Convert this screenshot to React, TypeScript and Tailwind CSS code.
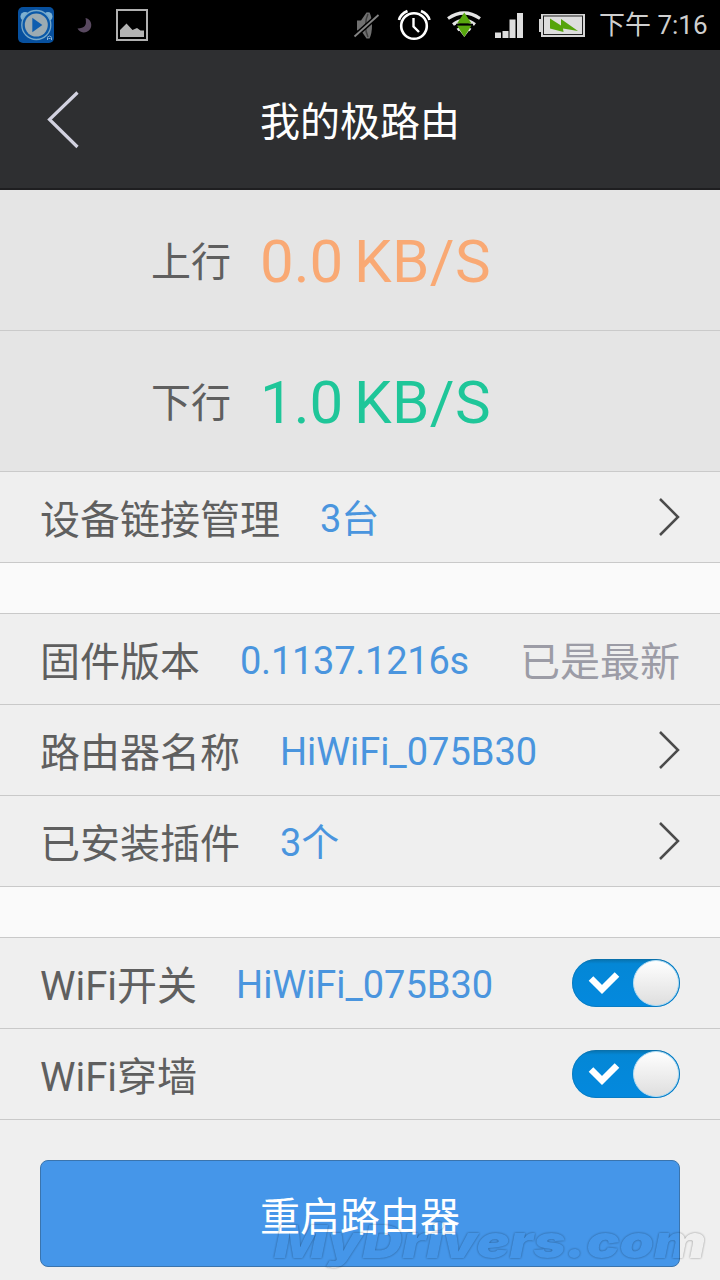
import type { ReactNode } from 'react'

export default function App() {
  return (
    <div className="relative flex h-[1280px] w-[720px] flex-col overflow-hidden bg-[#efefef] font-['Roboto','Noto_Sans_CJK_SC',sans-serif] text-[#5f5f5f]">
      <StatusBar />

      <header className="relative flex h-[140px] shrink-0 items-center justify-center border-b-2 border-[#1e1e20] bg-[#2e2f31]">
        <button aria-label="返回" className="absolute top-10 left-[46px]">
          <svg width="34" height="60" viewBox="0 0 34 60" fill="none">
            <path d="M31.5 2.5 3.5 29.5l28 27.5" stroke="#d2d2e0" strokeWidth="3.200" />
          </svg>
        </button>
        <h1 className="pt-2 text-[40px] leading-none text-white">我的极路由</h1>
      </header>

      <Speed label="上行" value="0.0" color="text-[#f9a974]" />
      <Speed label="下行" value="1.0" color="text-[#1fc699]" />

      <Row label="设备链接管理" value="3台">
        <Chevron />
      </Row>
      <Gap />
      <Row label="固件版本" value="0.1137.1216s" valueClass="tracking-[-0.25px]">
        <span className="block pt-2 text-[40px] leading-none text-[#9c9ca6]">已是最新</span>
      </Row>
      <Row label="路由器名称" value="HiWiFi_075B30">
        <Chevron />
      </Row>
      <Row label="已安装插件" value="3个">
        <Chevron />
      </Row>
      <Gap />
      <Row label="WiFi开关" labelClass="-mr-px" value="HiWiFi_075B30">
        <Toggle id="wifi" />
      </Row>
      <Row label="WiFi穿墙">
        <Toggle id="wall" />
      </Row>

      <div className="px-10 pt-10">
        <button className="flex h-[107px] w-full items-center justify-center rounded-lg border border-[#3a74ad] bg-[#4596e9] pt-2 text-[40px] leading-none text-white">
          重启路由器
        </button>
      </div>

      <Watermark />
    </div>
  )
}

function StatusBar() {
  return (
    <div className="flex h-[50px] shrink-0 items-center bg-black">
      <svg width="160" height="50" viewBox="0 0 160 50">
        <rect x="18" y="7" width="36" height="36" rx="5" fill="#07509e" />
        <circle cx="25" cy="16.500" r="4.500" fill="#7db1d2" />
        <circle cx="48" cy="16.500" r="4.500" fill="#7db1d2" />
        <circle cx="36.300" cy="25" r="14.500" fill="#0b59a8" stroke="#77a9ca" strokeWidth="1.300" />
        <circle cx="36.300" cy="25" r="11.500" fill="#9cabb2" />
        <path d="M32.300 17.800v14.500l10-7.300z" fill="#0d5db0" />
        <path d="M47 37.500q2.500-3 5 0M47.500 40v-2M51.500 40v-2M48.500 38.500h2" stroke="#8db5d6" fill="none" />
        <path d="M85.500 18a7.300 7.300 0 1 1-8 10.500Q88 28.500 85.500 18z" fill="#594960" />
        <rect x="117" y="10" width="30" height="30" fill="none" stroke="#b1b1b1" strokeWidth="2" />
        <path d="M120 37v-7l6.500-6.500 6 6.500 4.500-2 3.500 2.500H144V37z" fill="#b4b4b4" />
      </svg>

      <svg className="ml-auto" width="250" height="50" viewBox="340 0 250 50">
        {/* mute */}
        <path d="M357 20.500h4l5.500-8h3q2.500 5 2.500 13t-2.500 13h-3l-5.500-8h-4z" fill="#707070" />
        <path d="M368 14q-2.500 5-2.500 11.500T368 37" fill="none" stroke="#3f3f3f" strokeWidth="1.500" />
        <path d="M354.500 36.500 378.500 15" stroke="#000" strokeWidth="5" />
        <path d="M354.500 36.500 378.500 15" stroke="#858585" strokeWidth="1.800" />

        {/* alarm */}
        <g fill="none" stroke="#fff">
          <circle cx="414" cy="26" r="12.800" strokeWidth="2.600" />
          <path d="M413.500 18v8.500l5.500 5.500" strokeWidth="2.400" />
          <path d="M399 20q1.500-6 8.500-9M429.500 20q-1.500-6-8.500-9" strokeWidth="2.600" />
        </g>

        {/* wifi */}
        <g fill="none" stroke="#e4e4e4" strokeWidth="3.200">
          <path d="M448 18.500q16-11 32 0" />
          <path d="M453 24.500q11-8 22 0" />
          <path d="M457.500 30q6.500-4.500 13 0" />
        </g>
        <path d="M464.300 37 459 30h10.600z" fill="#e4e4e4" />
        <path d="M464.300 12.500 471.500 23.500h-14.500z" fill="#58a80e" />
        <path d="M457 25.500h14.500L464.300 37z" fill="#58a80e" />
        <path d="M456 24.500h17" stroke="#000" strokeWidth="1.500" />

        {/* signal */}
        <path d="M495 32.500h6V38h-6zM502.500 31h6v7h-6zM509.500 19.500h6V38h-6zM517 13h6v25h-6z" fill="#dedede" />

        {/* battery */}
        <path d="M541 14h44v23h-44v-5h-2V19h2z" fill="#d6d6d6" />
        <rect x="543.500" y="16" width="39" height="18.500" fill="#dedede" stroke="#222" />
        <path d="M550 18.500l11 7v-6.500l17 12-15-2.500.5 3.500-13.500-3.500z" fill="#55a40b" />
      </svg>

      <span className="mr-3 ml-[9px] w-[109px] text-[26px] leading-none whitespace-nowrap text-[#cfcfcf]">
        下午 7:16
      </span>
    </div>
  )
}

function Speed({ label, value, color }: { label: string; value: string; color: string }) {
  return (
    <div className="flex h-[141px] shrink-0 items-center border-b border-[#cacaca] bg-[#e5e5e5] pl-[151px]">
      <span className="w-[109px] pt-1.5 text-[40px] leading-none">{label}</span>
      <span className={`flex pt-1 text-[60px] leading-none ${color}`}>
        <span className="w-[94px]">{value}</span>
        <span className="tracking-[0.4px]">KB/S</span>
      </span>
    </div>
  )
}

type RowProps = {
  label: string
  labelClass?: string
  value?: string
  valueClass?: string
  children: ReactNode
}

function Row({ label, labelClass = '', value, valueClass = '', children }: RowProps) {
  return (
    <div className="flex h-[91px] shrink-0 items-center border-b border-[#c9c9c9] bg-[#efefef] px-10">
      <span className={`pt-[7px] text-[40px] leading-none ${labelClass}`}>{label}</span>
      {value && <span className={`ml-10 pt-1 text-[38px] leading-none text-[#4a95de] ${valueClass}`}>{value}</span>}
      <div className="ml-auto">{children}</div>
    </div>
  )
}

function Gap() {
  return <div className="h-[51px] shrink-0 border-b border-[#c9c9c9] bg-[#fafafa]" />
}

function Chevron() {
  return (
    <svg width="22" height="40" viewBox="0 0 22 40" fill="none">
      <path d="M2 2 20 20 2 38" stroke="#4b4b4b" strokeWidth="2.500" />
    </svg>
  )
}

function Toggle({ id }: { id: string }) {
  return (
    <svg width="108" height="48" viewBox="0 0 108 48">
      <defs>
        <linearGradient id={`${id}-track`} x2="0" y2="1">
          <stop stopColor="#0870aa" />
          <stop offset=".1" stopColor="#0487d6" />
          <stop offset="1" stopColor="#0489de" />
        </linearGradient>
        <linearGradient id={`${id}-knob`} x2="0" y2="1">
          <stop stopColor="#fff" />
          <stop offset="1" stopColor="#dedede" />
        </linearGradient>
      </defs>
      <rect width="108" height="48" rx="24" fill={`url(#${id}-track)`} />
      <rect x=".5" y=".5" width="107" height="47" rx="23.500" fill="none" stroke="#0b6fa9" strokeOpacity=".5" />
      <path d="M19 19.500l11 11L45 15.500" fill="none" stroke="#fff" strokeWidth="6.500" />
      <circle cx="84" cy="24" r="22.500" fill={`url(#${id}-knob)`} stroke="#b5ddf2" />
    </svg>
  )
}

function Watermark() {
  return (
    <svg className="pointer-events-none absolute top-[1215px] left-[268px]" width="452" height="60" viewBox="0 0 452 60">
      <defs>
        <filter id="edge" x="-5%" y="-20%" width="110%" height="150%">
          <feGaussianBlur in="SourceAlpha" stdDeviation="1.300" />
          <feComposite in2="SourceAlpha" operator="out" />
        </filter>
      </defs>
      <text
        x="6"
        y="43"
        textLength="432"
        lengthAdjust="spacingAndGlyphs"
        filter="url(#edge)"
        opacity=".4"
        className="font-['Inter','Liberation_Sans',sans-serif] text-[46px] font-black italic"
      >
        MyDrivers.com
      </text>
    </svg>
  )
}
